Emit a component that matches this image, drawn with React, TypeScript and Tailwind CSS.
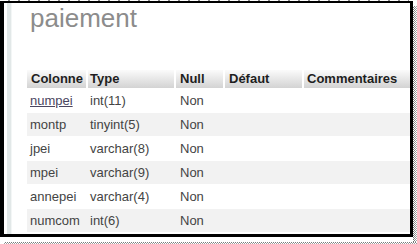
import React from "react";

const rows = [
  { name: "numpei", type: "int(11)", nul: "Non", link: true, alt: false },
  { name: "montp", type: "tinyint(5)", nul: "Non", link: false, alt: true },
  { name: "jpei", type: "varchar(8)", nul: "Non", link: false, alt: false },
  { name: "mpei", type: "varchar(9)", nul: "Non", link: false, alt: true },
  { name: "annepei", type: "varchar(4)", nul: "Non", link: false, alt: false },
  { name: "numcom", type: "int(6)", nul: "Non", link: false, alt: true },
];

const th =
  "h-full flex items-center pl-[4px] bg-[linear-gradient(#fbfbfb,#d3d3d3)] text-[13px] font-bold text-[#1e1e1e]";

export default function App() {
  return (
    <div className="w-[417px] h-[244px] bg-white flex flex-col overflow-hidden font-['Liberation_Sans',Arial,sans-serif]">
      <div className="h-[3px] ml-[8px] mr-[8px] bg-[repeating-linear-gradient(to_right,#8a8a8a_0_2px,transparent_2px_10px)] bg-[length:100%_1px] bg-no-repeat" />
      <div className="flex">
        <div className="w-[413px] h-[236px] border-l-4 border-t-2 border-r-[3px] border-b-[3px] border-black flex bg-white">
          <div className="ml-[3px] w-[5px] h-full bg-[#e2e8e8] border-r border-[#f3f6f6]" />
          <div className="ml-[15px] flex-1 flex flex-col">
            <div className="h-[67px] pl-[3px] pt-[2px]">
              <div className="text-[26px] leading-[26px] text-[#8c8c8c]">paiement</div>
            </div>
            <div className="h-[18px] flex gap-[2px]">
              <div className={`${th} w-[59px]`}>Colonne</div>
              <div className={`${th} w-[86px] !pl-[2px]`}>Type</div>
              <div className={`${th} w-[47px]`}>Null</div>
              <div className={`${th} w-[77px]`}>Défaut</div>
              <div className={`${th} flex-1 !pl-[3px]`}>Commentaires</div>
            </div>
            <div className="mt-px flex flex-col gap-px">
              {rows.map((r) => (
                <div
                  key={r.name}
                  className={`h-[23px] flex gap-[2px] items-center text-[13px] text-[#444] ${r.alt ? "bg-[#f2f2f2]" : "bg-white"}`}
                >
                  <div className="w-[59px] pl-[3px]">
                    {r.link ? (
                      <span className="underline text-[#4a4660]">{r.name}</span>
                    ) : (
                      r.name
                    )}
                  </div>
                  <div className="w-[86px] pl-[2px]">{r.type}</div>
                  <div className="w-[47px] pl-[4px]">{r.nul}</div>
                  <div className="w-[77px]" />
                  <div className="flex-1" />
                </div>
              ))}
            </div>
          </div>
        </div>
        <div className="mt-[5px] w-[4px] h-[236px] bg-[repeating-conic-gradient(#666_0_25%,#fff_0_50%)] bg-[length:2px_2px]">
          <div className="w-full h-full bg-[linear-gradient(to_right,rgba(255,255,255,0),rgba(255,255,255,0.5))]" />
        </div>
      </div>
      <div className="ml-[4px] h-[5px] w-[413px] bg-[repeating-conic-gradient(#666_0_25%,#fff_0_50%)] bg-[length:2px_2px]">
        <div className="w-full h-full bg-[linear-gradient(to_bottom,rgba(255,255,255,0),rgba(255,255,255,0.5))]" />
      </div>
    </div>
  );
}
